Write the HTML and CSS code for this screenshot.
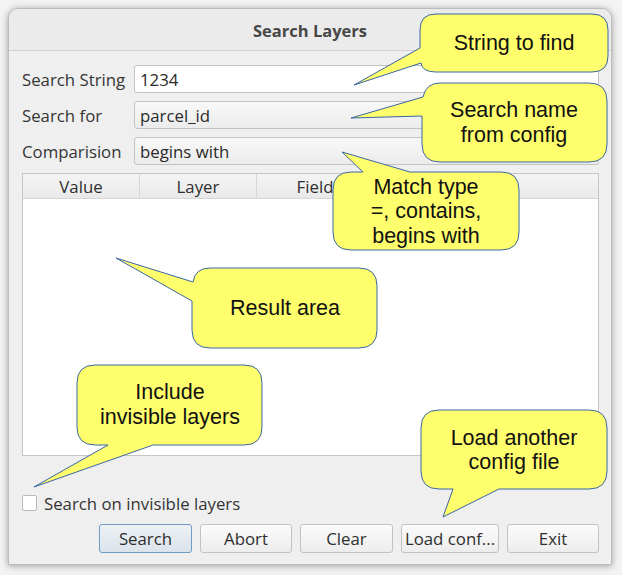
FILE: index.html
```html
<!DOCTYPE html>
<html>
<head>
<meta charset="utf-8">
<link rel="stylesheet" href="styles.css">
</head>
<body>
<div class="window">
  <div class="titlebar">Search Layers</div>
  <div class="content">
    <div class="form">
      <div class="label">Search String</div><div class="field input">1234</div>
      <div class="label">Search for</div><div class="field combo">parcel_id</div>
      <div class="label">Comparision</div><div class="field combo">begins with</div>
    </div>
    <div class="table">
      <div class="thead">
        <div class="th">Value</div><div class="th">Layer</div><div class="th">Field</div><div class="th"></div><div class="th last"></div>
      </div>
      <div class="tbody"></div>
    </div>
    <div class="check"><span class="box"></span><span>Search on invisible layers</span></div>
    <div class="buttons">
      <div class="btn default w93">Search</div>
      <div class="btn">Abort</div>
      <div class="btn w93">Clear</div>
      <div class="btn wide">Load conf...</div>
      <div class="btn">Exit</div>
    </div>
  </div>
</div>
<svg class="callouts" width="622" height="575" viewBox="0 0 622 575">
  <g class="shape">
    <path d="M436,14 H592 Q608,14 608,30 V56 Q608,72 592,72 H436 Q422,72 421,63 L354,85 L420,48 V30 Q420,14 436,14 Z"/>
    <path d="M440,83 H589 Q607,83 607,101 V144 Q607,162 589,162 H440 Q422,162 422,144 V116 L351,118 L423,97 Q426,83 440,83 Z"/>
    <path d="M351,172 H363 L342,152 L410,172 H501 Q519,172 519,190 V232 Q519,250 501,250 H351 Q333,250 333,232 V190 Q333,172 351,172 Z"/>
    <path d="M210,268 H359 Q377,268 377,286 V330 Q377,348 359,348 H210 Q192,348 192,330 V301 L116,258 L193,282 Q195,268 210,268 Z"/>
    <path d="M95,365 H244 Q262,365 262,383 V427 Q262,445 244,445 H153 L34,487 L108,445 H95 Q77,445 77,427 V383 Q77,365 95,365 Z"/>
    <path d="M439,410 H589 Q607,410 607,428 V471 Q607,489 589,489 H499 L443,517 L453,489 H439 Q421,489 421,471 V428 Q421,410 439,410 Z"/>
  </g>
  <g class="ctext">
    <text x="514" y="50">String to find</text>
    <text x="514" y="117">Search name</text>
    <text x="514" y="142">from config</text>
    <text x="426" y="194">Match type</text>
    <text x="426" y="218">=, contains,</text>
    <text x="426" y="243">begins with</text>
    <text x="285" y="315">Result area</text>
    <text x="170" y="399">Include</text>
    <text x="170" y="424">invisible layers</text>
    <text x="514" y="445">Load another</text>
    <text x="514" y="469">config file</text>
  </g>
</svg>
</body>
</html>
```
FILE: styles.css
```css
html, body {
  margin: 0;
  padding: 0;
}
body {
  width: 622px;
  height: 575px;
  background: #f3f3f3;
  padding: 8px 0 0 8px;
  box-sizing: border-box;
  font-family: "Open Sans", "Noto Sans", sans-serif;
  font-size: 16.8px;
  color: #353535;
  position: relative;
  overflow: hidden;
}
.window {
  width: 604px;
  height: 557px;
  box-sizing: border-box;
  border: 1px solid #bcbcbc;
  border-radius: 10px 10px 0 0;
  background: #efefef;
  box-shadow: 0 1px 7px rgba(0, 0, 0, 0.35);
  display: flex;
  flex-direction: column;
}
.titlebar {
  height: 42px;
  box-sizing: border-box;
  padding-top: 1px;
  border-bottom: 1px solid #d3d3d3;
  background: #ebebeb;
  border-radius: 9px 9px 0 0;
  display: flex;
  align-items: center;
  justify-content: center;
  font-weight: bold;
  font-size: 16.5px;
  color: #474747;
}
.content {
  padding: 14px 12px 0 13px;
  display: flex;
  flex-direction: column;
}
.form {
  display: grid;
  grid-template-columns: 112px 1fr;
  row-gap: 8px;
}
.label {
  height: 28px;
  display: flex;
  align-items: center;
  white-space: nowrap;
}
.field {
  height: 28px;
  box-sizing: border-box;
  border: 1px solid #c3c3c3;
  border-radius: 3px;
  display: flex;
  align-items: center;
  padding-left: 5px;
  color: #2a2a2a;
}
.input {
  background: #ffffff;
}
.combo {
  background: linear-gradient(#f8f8f8, #ececec);
}
.table {
  margin-top: 8px;
  height: 283px;
  box-sizing: border-box;
  border: 1px solid #c6c6c6;
  background: #ffffff;
  display: flex;
  flex-direction: column;
}
.thead {
  height: 25px;
  box-sizing: border-box;
  border-bottom: 1px solid #d6d6d6;
  background: linear-gradient(#f4f4f4, #e9e9e9);
  display: flex;
}
.th {
  width: 117px;
  flex: none;
  box-sizing: border-box;
  border-right: 1px solid #d6d6d6;
  display: flex;
  align-items: center;
  justify-content: center;
  color: #2e2e2e;
}
.th.last {
  flex: 1;
  border-right: none;
}
.tbody {
  flex: 1;
}
.check {
  margin-top: 39px;
  height: 16px;
  display: flex;
  align-items: center;
  gap: 7px;
}
.box {
  width: 15px;
  height: 16px;
  box-sizing: border-box;
  border: 1px solid #b9b9b9;
  border-radius: 2px;
  background: #ffffff;
  flex: none;
}
.buttons {
  margin-top: 13px;
  display: flex;
  justify-content: flex-end;
  gap: 8px;
}
.btn {
  width: 92px;
  height: 29px;
  box-sizing: border-box;
  border: 1px solid #c2c2c2;
  border-radius: 3px;
  background: linear-gradient(#fbfbfb, #ededed);
  display: flex;
  align-items: center;
  justify-content: center;
  color: #2e2e2e;
  white-space: nowrap;
}
.btn.w93 {
  width: 93px;
}
.btn.wide {
  width: 98px;
}
.btn.default {
  border-color: #6f9bc4;
  background: linear-gradient(#edf1f5, #dbe3ea);
}
.callouts {
  position: absolute;
  left: 0;
  top: 0;
  pointer-events: none;
}
.shape path {
  fill: #ffff6e;
  stroke: #3b67a3;
  stroke-width: 1;
}
.ctext text {
  font-family: "Liberation Sans", Arial, sans-serif;
  font-size: 21.5px;
  fill: #111111;
  text-anchor: middle;
}
```
